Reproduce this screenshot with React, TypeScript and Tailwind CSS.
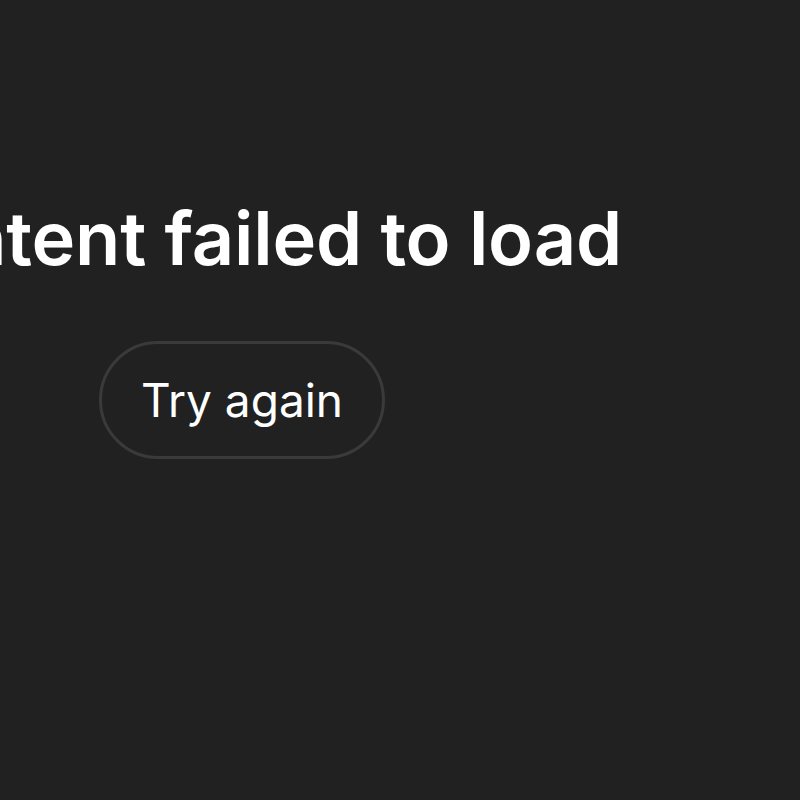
export default function App() {
  return (
    <div className="w-[800px] h-[800px] bg-[#212121] overflow-hidden" style={{ fontFamily: "Inter, 'Noto Sans', sans-serif" }}>
      <div className="w-[484px] flex flex-col items-center pt-[193px]">
        <h1 className="whitespace-nowrap text-white text-[74px] leading-[90px] font-semibold tracking-[-0.2px]">
          Content failed to load
        </h1>
        <button className="mt-[58px] w-[286px] h-[118px] rounded-full border-[3px] border-[#3a3a3a] text-white text-[46px] font-normal">
          Try again
        </button>
      </div>
    </div>
  );
}
